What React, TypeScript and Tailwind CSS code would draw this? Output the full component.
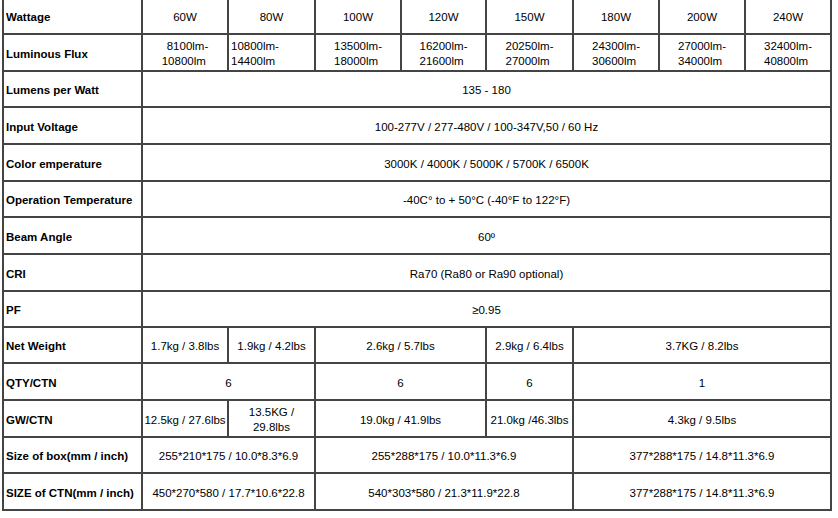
import React from "react";

type Cell = { text: React.ReactNode; span?: number; cls?: string };

const spanCls: Record<number, string> = {
  1: "col-span-1",
  2: "col-span-2",
  3: "col-span-3",
  8: "col-span-8",
};

const flux = (a: string, b: string, extra = "") => (
  <span className={"inline-block text-left " + extra}>
    {a}
    <br />
    {b}
  </span>
);

const rows: { label: string; cells: Cell[] }[] = [
  {
    label: "Wattage",
    cells: ["60W", "80W", "100W", "120W", "150W", "180W", "200W", "240W"].map((t) => ({ text: t })),
  },
  {
    label: "Luminous Flux",
    cells: [
      {
        text: (
          <span className="inline-block text-left">
            <span className="pl-[5px]">8100lm-</span>
            <br />
            10800lm
          </span>
        ),
      },
      { text: flux("10800lm-", "14400lm"), cls: "justify-start pl-[2px]" },
      { text: flux("13500lm-", "18000lm") },
      { text: flux("16200lm-", "21600lm") },
      { text: flux("20250lm-", "27000lm") },
      { text: flux("24300lm-", "30600lm") },
      { text: flux("27000lm-", "34000lm") },
      { text: flux("32400lm-", "40800lm") },
    ],
  },
  { label: "Lumens per Watt", cells: [{ text: "135 - 180", span: 8 }] },
  { label: "Input Voltage", cells: [{ text: "100-277V / 277-480V / 100-347V,50 / 60 Hz", span: 8 }] },
  { label: "Color emperature", cells: [{ text: "3000K / 4000K / 5000K / 5700K / 6500K", span: 8 }] },
  { label: "Operation Temperature", cells: [{ text: "-40C° to + 50°C (-40°F to 122°F)", span: 8 }] },
  { label: "Beam Angle", cells: [{ text: "60º", span: 8 }] },
  { label: "CRI", cells: [{ text: "Ra70 (Ra80 or Ra90 optional)", span: 8 }] },
  { label: "PF", cells: [{ text: "≥0.95", span: 8 }] },
  {
    label: "Net Weight",
    cells: [
      { text: "1.7kg / 3.8lbs" },
      { text: "1.9kg / 4.2lbs" },
      { text: "2.6kg / 5.7lbs", span: 2 },
      { text: "2.9kg / 6.4lbs" },
      { text: "3.7KG / 8.2lbs", span: 3 },
    ],
  },
  {
    label: "QTY/CTN",
    cells: [
      { text: "6", span: 2 },
      { text: "6", span: 2 },
      { text: "6" },
      { text: "1", span: 3 },
    ],
  },
  {
    label: "GW/CTN",
    cells: [
      { text: "12.5kg / 27.6lbs" },
      {
        text: (
          <span className="inline-block text-center">
            13.5KG /
            <br />
            29.8lbs
          </span>
        ),
      },
      { text: "19.0kg / 41.9lbs", span: 2 },
      { text: "21.0kg /46.3lbs" },
      { text: "4.3kg / 9.5lbs", span: 3 },
    ],
  },
  {
    label: "Size of box(mm / inch)",
    cells: [
      { text: "255*210*175 / 10.0*8.3*6.9", span: 2 },
      { text: "255*288*175 / 10.0*11.3*6.9", span: 3 },
      { text: "377*288*175 / 14.8*11.3*6.9", span: 3 },
    ],
  },
  {
    label: "SIZE of CTN(mm / inch)",
    cells: [
      { text: "450*270*580 / 17.7*10.6*22.8", span: 2 },
      { text: "540*303*580 / 21.3*11.9*22.8", span: 3 },
      { text: "377*288*175 / 14.8*11.3*6.9", span: 3 },
    ],
  },
];

export default function App() {
  return (
    <div className="w-[838px] h-[518px] overflow-hidden bg-white">
      <div
        className="ml-[2px] -mt-[4px] w-[830px] grid gap-[2px] p-[2px] bg-[#444444] text-black text-[11.5px] leading-[15px] grid-cols-[137px_84px_85px_84px_83px_85px_84px_84px_84px] grid-rows-[35px_35px_34px_35px_35px_34px_35px_35px_34px_34px_35px_35px_34px_35px]"
        style={{ fontFamily: '"Liberation Sans", Arial, sans-serif' }}
      >
        {rows.map((r, i) => (
          <React.Fragment key={i}>
            <div className="bg-white flex items-center pl-[2px] pt-[3px] font-bold whitespace-nowrap">
              {r.label}
            </div>
            {r.cells.map((c, j) => (
              <div
                key={j}
                className={
                  "bg-white flex items-center pt-[3px] whitespace-nowrap " +
                  spanCls[c.span ?? 1] +
                  " " +
                  (c.cls ?? "justify-center text-center")
                }
              >
                {c.text}
              </div>
            ))}
          </React.Fragment>
        ))}
      </div>
    </div>
  );
}
